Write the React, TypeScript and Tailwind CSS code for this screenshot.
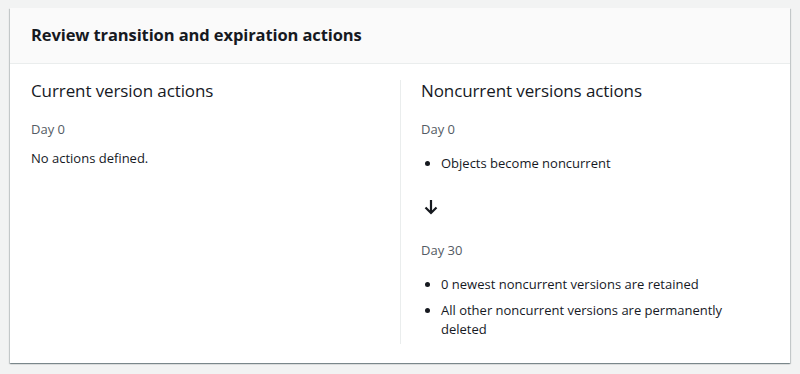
export default function App() {
  const font = { fontFamily: '"Open Sans", "Liberation Sans", Arial, sans-serif' };
  return (
    <div className="w-[800px] h-[374px] bg-[#f2f3f3] pt-[8px] px-[10px]" style={font}>
      <div className="bg-white shadow-[0_1px_1px_0_rgba(0,28,36,0.3),1px_1px_1px_0_rgba(0,28,36,0.15),-1px_1px_1px_0_rgba(0,28,36,0.15)]">
        <div className="h-[56px] bg-[#fafafa] border-b border-[#eaeded] px-[21px] flex items-center">
          <h2 className="text-[16.5px] font-bold text-[#16191f] tracking-[-0.1px]">Review transition and expiration actions</h2>
        </div>
        <div className="grid grid-cols-2 px-[20px] pt-[16px] pb-[19px] text-[14px] text-[#16191f]">
          <div className="pl-[1px] pr-[20px]">
            <h3 className="text-[17px] leading-[22px] tracking-[-0.1px]">Current version actions</h3>
            <div className="mt-[16px] leading-[22px] text-[#545b64] text-[13px]">Day 0</div>
            <div className="mt-[7px] leading-[22px] text-[13px]">No actions defined.</div>
          </div>
          <div className="border-l border-[#eaeded] pl-[20px] pb-[5px]">
            <h3 className="text-[17px] leading-[22px] tracking-[-0.1px]">Noncurrent versions actions</h3>
            <div className="mt-[16px] leading-[22px] text-[#545b64] text-[13px]">Day 0</div>
            <ul className="mt-[13px] list-disc pl-[20px] text-[13px] leading-[20px]">
              <li>Objects become noncurrent</li>
            </ul>
            <div className="mt-[26px] h-[16px] pl-[3px]">
              <svg width="14" height="16" viewBox="0 0 14 16">
                <path d="M7 1 V14 M1.5 8.5 L7 14 L12.5 8.5" fill="none" stroke="#16191f" strokeWidth="2.2" />
              </svg>
            </div>
            <div className="mt-[24px] leading-[22px] text-[#545b64] text-[13px]">Day 30</div>
            <ul className="mt-[14px] list-disc pl-[20px] text-[13px] leading-[19px] space-y-[7px]">
              <li>0 newest noncurrent versions are retained</li>
              <li>All other noncurrent versions are permanently deleted</li>
            </ul>
          </div>
        </div>
      </div>
    </div>
  );
}
